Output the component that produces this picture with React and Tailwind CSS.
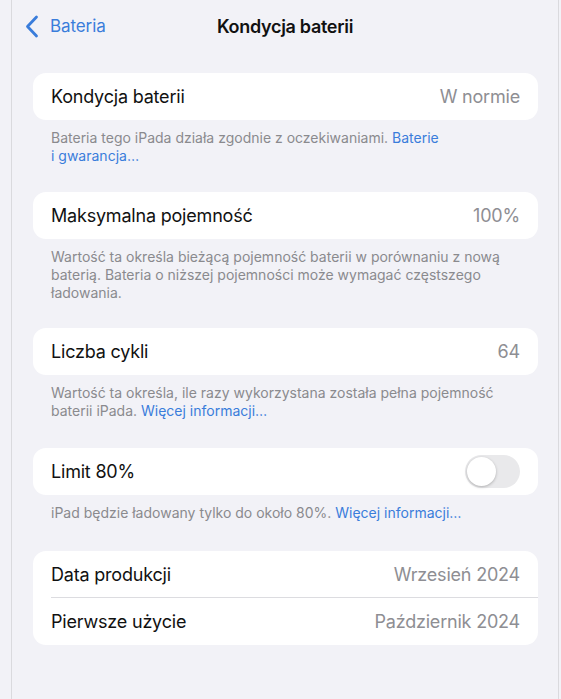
import React, { useState } from 'react';

const font = { fontFamily: 'Inter, "Noto Sans", sans-serif' };

function Card({ children }) {
  return <div className="ml-[21px] mr-[20px] bg-white rounded-[13px] overflow-hidden">{children}</div>;
}

function Row({ label, value, divider, children }) {
  return (
    <div className="relative h-[47px] flex items-center justify-between pl-[18px] pr-[18px]">
      <span className="text-[18px] text-[#111] tracking-[-0.2px]">{label}</span>
      {value && <span className="text-[18px] text-[#8e8e93] tracking-[-0.2px]">{value}</span>}
      {children}
      {divider && <div className="absolute left-[18px] right-0 bottom-0 h-px bg-[#dcdce0]" />}
    </div>
  );
}

function Note({ children, pb = 'pb-[27px]' }) {
  return (
    <div className={`pl-[39px] pt-[9px] ${pb} text-[14px] leading-[18px] text-[#8a8a8e] whitespace-nowrap`}>
      {children}
    </div>
  );
}

function Link({ children }) {
  return <span className="text-[#3a7ddb]">{children}</span>;
}

function Toggle() {
  const [on, setOn] = useState(false);
  return (
    <button
      onClick={() => setOn(!on)}
      className={`w-[55px] h-[33px] rounded-full p-[2px] flex ${on ? 'bg-[#34c759] justify-end' : 'bg-[#e9e9eb] justify-start'}`}
    >
      <span className="w-[29px] h-[29px] rounded-full bg-white shadow-[0_1px_3px_rgba(0,0,0,0.25)]" />
    </button>
  );
}

export default function App() {
  return (
    <div style={font} className="w-[561px] h-[699px] bg-[#f2f2f7] overflow-hidden">
      <div className="ml-[11px] mr-[2px] h-full border-l border-r border-[#dadade]">
        {/* Nav */}
        <div className="relative h-[52px] flex items-center justify-center">
          <div className="absolute left-[13px] top-[14px] flex items-center gap-[11px] text-[#3a7ddb]">
            <svg width="14" height="23" viewBox="0 0 14 23" fill="none">
              <path d="M11.5 2 L2.5 11.5 L11.5 21" stroke="#3a7ddb" strokeWidth="2.8" strokeLinecap="round" strokeLinejoin="round" />
            </svg>
            <span className="text-[17px] tracking-[-0.1px]">Bateria</span>
          </div>
          <span className="text-[18px] font-semibold text-[#111] tracking-[-0.3px]">Kondycja baterii</span>
        </div>

        <div className="pt-[21px]">
          <Card>
            <Row label="Kondycja baterii" value="W normie" />
          </Card>
          <Note>
            Bateria tego iPada działa zgodnie z oczekiwaniami. <Link>Baterie</Link>
            <br />
            <Link>i gwarancja…</Link>
          </Note>

          <Card>
            <Row label="Maksymalna pojemność" value="100%" />
          </Card>
          <Note pb="pb-[26px]">
            Wartość ta określa bieżącą pojemność baterii w porównaniu z nową
            <br />
            baterią. Bateria o niższej pojemności może wymagać częstszego
            <br />
            ładowania.
          </Note>

          <Card>
            <Row label="Liczba cykli" value="64" />
          </Card>
          <Note pb="pb-[28px]">
            Wartość ta określa, ile razy wykorzystana została pełna pojemność
            <br />
            baterii iPada. <Link>Więcej informacji…</Link>
          </Note>

          <Card>
            <Row label="Limit 80%">
              <Toggle />
            </Row>
          </Card>
          <Note pb="pb-[29px]">
            iPad będzie ładowany tylko do około 80%. <Link>Więcej informacji…</Link>
          </Note>

          <Card>
            <Row label="Data produkcji" value="Wrzesień 2024" divider />
            <Row label="Pierwsze użycie" value="Październik 2024" />
          </Card>
        </div>
      </div>
    </div>
  );
}
